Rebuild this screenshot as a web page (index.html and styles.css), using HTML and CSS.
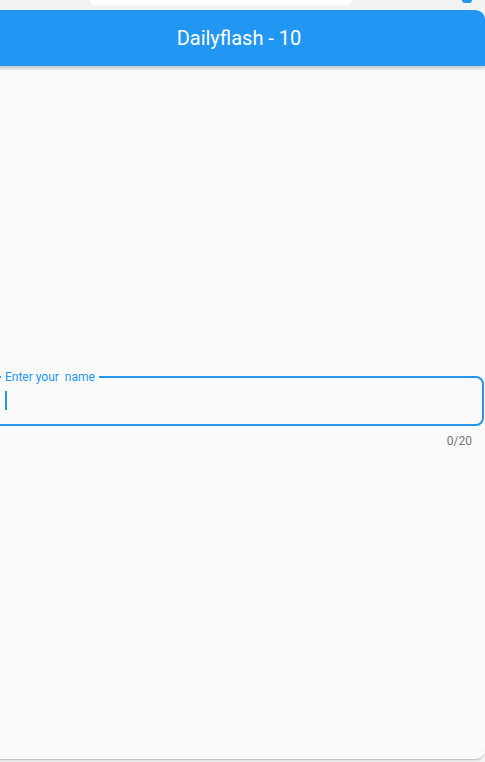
FILE: index.html
```html
<!DOCTYPE html>
<html>
<head>
<meta charset="utf-8">
<link rel="stylesheet" href="styles.css">
</head>
<body>
<div class="top">
  <div class="pill"></div>
  <div class="dot"></div>
</div>
<div class="screen">
  <header class="appbar">Dailyflash - 10</header>
  <main class="content">
    <div class="field">
      <div class="box">
        <span class="label">Enter your&nbsp; name</span>
        <span class="cursor"></span>
      </div>
      <div class="counter">0/20</div>
    </div>
  </main>
</div>
</body>
</html>
```
FILE: styles.css
```css
html, body {
  margin: 0;
  padding: 0;
}
body {
  background: #f3f3f3;
  font-family: Roboto, "Liberation Sans", sans-serif;
  width: 485px;
  height: 762px;
  overflow: hidden;
}
.top {
  height: 10px;
  display: flex;
  align-items: flex-start;
  padding-left: 90px;
  box-sizing: border-box;
}
.pill {
  width: 262px;
  height: 5px;
  background: #ffffff;
  border-radius: 0 0 8px 8px;
}
.dot {
  width: 10px;
  height: 3px;
  margin-left: 110px;
  background: #2196f3;
  border-radius: 0 0 4px 4px;
}
.screen {
  margin-left: -7px;
  width: 492px;
  height: 749px;
  background: #fafafa;
  border-radius: 0 9px 9px 0;
  box-shadow: 0 2px 2px -1px rgba(0,0,0,0.25);
  display: flex;
  flex-direction: column;
  overflow: hidden;
}
.appbar {
  height: 56px;
  flex: none;
  background: #2196f3;
  color: #ffffff;
  font-size: 20px;
  font-weight: 400;
  display: flex;
  align-items: center;
  justify-content: center;
  padding-right: 0;
  border-radius: 0 9px 0 0;
  box-shadow: 0 2px 4px rgba(0,0,0,0.25);
  position: relative;
  z-index: 1;
}
.content {
  flex: 1;
  display: flex;
  flex-direction: column;
  justify-content: center;
}
.field {
  display: flex;
  flex-direction: column;
  margin-top: -1px;
  margin-right: 1px;
}
.box {
  position: relative;
  height: 50px;
  box-sizing: border-box;
  border: 2px solid #2196f3;
  border-radius: 8px;
}
.label {
  position: absolute;
  left: 6px;
  top: -9px;
  padding: 0 4px;
  background: #fafafa;
  color: #2196f3;
  font-size: 12px;
  line-height: 16px;
}
.cursor {
  position: absolute;
  left: 10px;
  top: 13px;
  width: 2px;
  height: 19px;
  background: #2196f3;
}
.counter {
  align-self: flex-end;
  padding: 8px 12px 0 0;
  font-size: 12px;
  line-height: 14px;
  color: #757575;
}
```
